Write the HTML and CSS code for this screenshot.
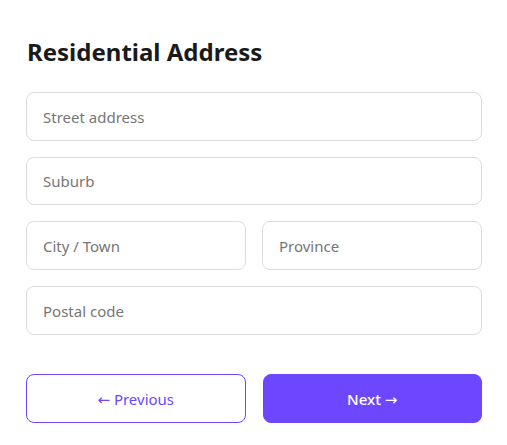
FILE: index.html
```html
<!DOCTYPE html>
<html lang="en">
<head>
<meta charset="utf-8">
<title>Residential Address</title>
<link rel="stylesheet" href="styles.css">
</head>
<body>
<form class="card">
  <h2 class="title">Residential Address</h2>
  <div class="fields">
    <input class="field" type="text" placeholder="Street address">
    <input class="field" type="text" placeholder="Suburb">
    <div class="row">
      <input class="field" type="text" placeholder="City / Town">
      <input class="field" type="text" placeholder="Province">
    </div>
    <input class="field" type="text" placeholder="Postal code">
  </div>
  <div class="actions">
    <button type="button" class="btn btn-outline"><span class="arrow">←</span> Previous</button>
    <button type="button" class="btn btn-primary">Next <span class="arrow">→</span></button>
  </div>
</form>
</body>
</html>
```

FILE: styles.css
```css
* { box-sizing: border-box; }
html, body { margin: 0; background: #ffffff; }
body {
  font-family: "Noto Sans", "Open Sans", sans-serif;
  color: #1a1a1a;
}
.card {
  padding: 36px 25px 0 26px;
}
.title {
  margin: 0 0 24px 1px;
  font-size: 24px;
  line-height: 32px;
  font-weight: 700;
  color: #1a1a1a;
}
.fields {
  display: flex;
  flex-direction: column;
  gap: 16px;
}
.row {
  display: grid;
  grid-template-columns: 1fr 1fr;
  gap: 16px;
}
.field {
  display: block;
  width: 100%;
  height: 48.67px;
  padding: 1px 16px 0;
  border: 1px solid #dcdcdc;
  border-radius: 8px;
  font-family: inherit;
  font-size: 15px;
  color: #1a1a1a;
  background: #fff;
  outline: none;
}
.field::placeholder { color: #767676; }
.actions {
  display: grid;
  grid-template-columns: 1fr 1fr;
  gap: 17px;
  margin-top: 39.33px;
}
.btn {
  height: 48.67px;
  padding: 1px 0 0;
  border-radius: 8px;
  font-family: inherit;
  font-size: 15px;
  cursor: pointer;
}
.arrow {
  font-family: "DejaVu Sans", sans-serif;
  font-weight: 400;
  font-size: 15px;
}
.btn-outline {
  background: #fff;
  border: 1px solid #6c47ff;
  color: #6c47ff;
}
.btn-primary {
  background: #6c47ff;
  border: 1px solid #6c47ff;
  color: #fff;
  font-weight: 500;
}
```
